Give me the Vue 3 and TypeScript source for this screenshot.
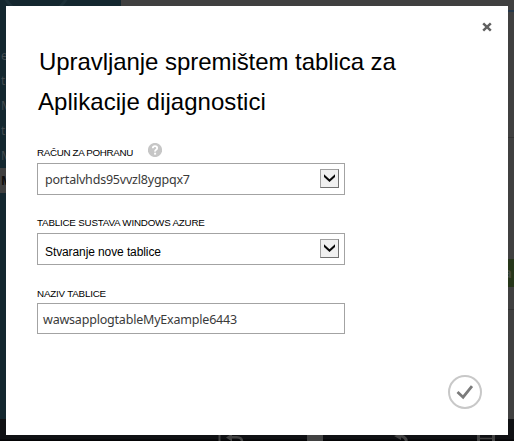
<script setup lang="ts">
interface Field {
  id: string
  label: string
  value: string
  kind: 'select' | 'input'
  help?: boolean
}

const titleLines: string[] = ['Upravljanje spremištem tablica za', 'Aplikacije dijagnostici']

const fields: Field[] = [
  { id: 'account', label: 'RAČUN ZA POHRANU', value: 'portalvhds95vvzl8ygpqx7', kind: 'select', help: true },
  { id: 'tables', label: 'TABLICE SUSTAVA WINDOWS AZURE', value: 'Stvaranje nove tablice', kind: 'select' },
  { id: 'name', label: 'NAZIV TABLICE', value: 'wawsapplogtableMyExample6443', kind: 'input' },
]

const navItems: string[] = ['e', 'te', 'M', 'te', 'M', 'M']
</script>

<template>
  <div class="screen">
    <div class="portal">
      <nav class="sidebar">
        <svg class="ring" width="80" height="8" viewBox="0 0 80 8">
          <path d="M5 -2Q8 3 13 8M67 -2Q64 3 59 8" fill="none" stroke="#1c3038" stroke-width="3" />
        </svg>
        <div v-for="(item, i) in navItems" :key="i" class="nav-item" :class="{ active: i === 5 }">{{ item }}</div>
      </nav>
      <main class="content">
        <div class="blue-rule"></div>
        <div class="rule first"></div>
        <div class="green">a</div>
        <div class="rule second"></div>
      </main>
    </div>
    <footer class="commands">
      <svg width="514" height="22" viewBox="0 0 514 22">
        <rect x="0" y="20.5" width="514" height="1.5" fill="#050506" />
        <g fill="none" stroke="#424242">
          <path d="M219.5 14v8" stroke-width="2" />
          <path d="M230 18.2h7q5 .2 5 4" stroke-width="2.5" />
          <path d="M398 16.5q7 0 8.5 5.5" stroke-width="3" />
          <path d="M478.5 22V14h15v8" stroke-width="3" />
          <path d="M480 19.5h12" stroke-width="1.5" />
        </g>
        <path d="M226 18.5l6-4v8zM394 17l7-3v7z" fill="#424242" />
        <rect x="307" y="14" width="16" height="8" fill="#424242" />
      </svg>
    </footer>

    <section class="dialog">
      <button class="close" aria-label="Zatvori">
        <svg width="10" height="10" viewBox="0 0 10 10">
          <path d="M1.2 1.4l7.6 7.2M8.8 1.4l-7.6 7.2" stroke="#606060" stroke-width="2.5" />
        </svg>
      </button>
      <h1 class="title">
        <span v-for="(line, i) in titleLines" :key="i" :class="'line' + i">{{ line }}</span>
      </h1>
      <form class="fields">
        <div v-for="f in fields" :key="f.id" class="field" :class="f.id">
          <div class="label">
            <span>{{ f.label }}</span>
            <svg v-if="f.help" class="help" width="14" height="14" viewBox="0 0 14 14">
              <circle cx="7" cy="7" r="7.1" fill="#c6c6c6" />
              <path d="M4.8 5.2Q4.9 3.2 7 3.2T9.2 5.1Q9.2 6.2 8.1 6.8T7.1 8.6" fill="none" stroke="#fff" stroke-width="1.8" />
              <rect x="6.1" y="9.7" width="2" height="1.9" fill="#fff" />
            </svg>
          </div>
          <div class="box" :class="f.kind">
            <span class="value">{{ f.value }}</span>
            <span v-if="f.kind === 'select'" class="arrow">
              <svg width="11" height="8" viewBox="0 0 11 8">
                <path d="M0 .2L5.5 5.2 11 .2V3L5.5 8 0 3z" fill="#080808" />
              </svg>
            </span>
          </div>
        </div>
      </form>
      <button class="confirm" aria-label="Potvrdi">
        <svg width="34" height="34" viewBox="0 0 34 34">
          <circle cx="17" cy="17" r="16" fill="#fff" stroke="#c8c8c8" stroke-width="2" />
          <path d="M9.5 17l5.6 5.2L24 11.2" fill="none" stroke="#7b7b7b" stroke-width="2.8" />
        </svg>
      </button>
    </section>
  </div>
</template>

<style>
body {
  margin: 0;
  overflow: hidden;
}
</style>

<style scoped>
.screen {
  position: relative;
  display: flex;
  flex-direction: column;
  width: 514px;
  height: 441px;
  overflow: hidden;
  background: #404040;
  font-family: 'Liberation Sans', Arial, sans-serif;
}
.portal {
  display: flex;
  height: 419px;
}
.sidebar {
  width: 121px;
  background: #14272f;
  color: #444c50;
}
.ring {
  display: block;
  margin-bottom: 35px;
}
.nav-item {
  height: 25px;
  padding-left: 1px;
  font: 12px/25px 'Open Sans', sans-serif;
}
.nav-item.active {
  background: #404040;
  color: #0c0c0c;
  font-weight: 700;
}
.content {
  flex: 1;
  display: flex;
  flex-direction: column;
}
.blue-rule {
  height: 2px;
  margin-top: 10px;
  background: #26384a;
}
.rule {
  height: 1px;
  background: #333;
}
.rule.first {
  margin-top: 125px;
}
.green {
  height: 28px;
  margin-top: 121px;
  background: #26361a;
  color: #454c40;
  font: 700 14px/28px 'Open Sans', sans-serif;
  text-align: right;
  padding-right: 2px;
}
.rule.second {
  margin-top: 22px;
}
.commands {
  height: 22px;
  background: #101114;
}
.commands svg {
  display: block;
}
.dialog {
  position: absolute;
  left: 6px;
  top: 6px;
  box-sizing: border-box;
  width: 502px;
  height: 429px;
  display: flex;
  flex-direction: column;
  padding: 16px 26px 26px 31px;
  background: #fff;
}
button {
  padding: 0;
  border: 0;
  background: none;
}
.close {
  align-self: flex-end;
  width: 10px;
  height: 10px;
  margin-right: -10px;
}
button svg {
  display: block;
}
.title {
  display: flex;
  flex-direction: column;
  margin: 10px 0 0;
  font-size: 24px;
  font-weight: 400;
  line-height: 40px;
  color: #000;
  white-space: nowrap;
}
.line0 {
  padding-left: 2px;
  letter-spacing: -0.06px;
}
.line1 {
  padding-left: 1px;
  letter-spacing: 0.05px;
}
.fields {
  display: flex;
  flex-direction: column;
  margin-top: 25px;
}
.field {
  margin-bottom: 22px;
}
.label {
  display: flex;
  height: 16px;
  font-size: 9.8px;
  line-height: 12px;
  letter-spacing: -0.2px;
  color: #000;
  white-space: nowrap;
}
.account .label {
  letter-spacing: -0.33px;
}
.name .label span {
  padding-top: 1px;
}
.help {
  margin: -4px 0 0 15px;
}
.box {
  box-sizing: border-box;
  display: flex;
  justify-content: space-between;
  width: 308px;
  height: 32px;
  border: 1px solid #a3a3a3;
  padding: 5px 5px 0 7px;
  font: 12.5px/22px 'Noto Sans', sans-serif;
  letter-spacing: -0.2px;
  color: #3a3a3a;
  white-space: nowrap;
}
.box.input {
  height: 31px;
  padding-left: 5px;
}
.tables .value {
  padding-top: 2px;
  font: 12px/22px 'Liberation Sans', sans-serif;
  letter-spacing: -0.1px;
  color: #000;
}
.arrow {
  box-sizing: border-box;
  width: 19px;
  height: 19px;
  display: flex;
  justify-content: center;
  padding-top: 4px;
  border: 1px solid #707070;
  border-top-color: #a0a0a0;
  border-left-color: #a0a0a0;
  background: #f0f0f0;
}
.confirm {
  align-self: flex-end;
  width: 34px;
  height: 34px;
  margin-top: auto;
}
</style>
